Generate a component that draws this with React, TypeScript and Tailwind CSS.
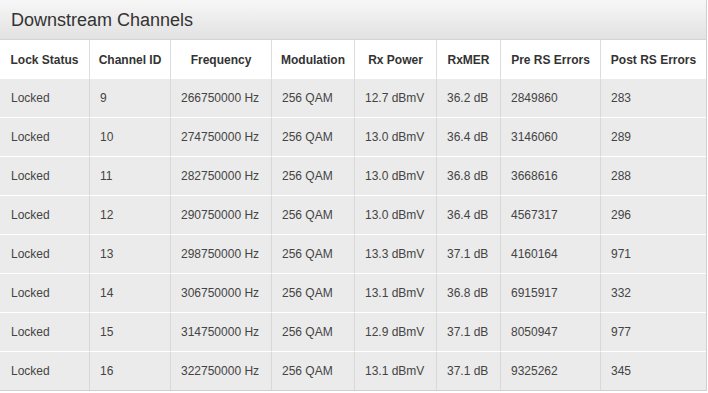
import React from 'react';

const cols = [
  { label: 'Lock Status', w: 90 },
  { label: 'Channel ID', w: 81 },
  { label: 'Frequency', w: 101 },
  { label: 'Modulation', w: 83 },
  { label: 'Rx Power', w: 82 },
  { label: 'RxMER', w: 64 },
  { label: 'Pre RS Errors', w: 100 },
  { label: 'Post RS Errors', w: 105 },
];

const rows = [
  ['Locked', '9', '266750000 Hz', '256 QAM', '12.7 dBmV', '36.2 dB', '2849860', '283'],
  ['Locked', '10', '274750000 Hz', '256 QAM', '13.0 dBmV', '36.4 dB', '3146060', '289'],
  ['Locked', '11', '282750000 Hz', '256 QAM', '13.0 dBmV', '36.8 dB', '3668616', '288'],
  ['Locked', '12', '290750000 Hz', '256 QAM', '13.0 dBmV', '36.4 dB', '4567317', '296'],
  ['Locked', '13', '298750000 Hz', '256 QAM', '13.3 dBmV', '37.1 dB', '4160164', '971'],
  ['Locked', '14', '306750000 Hz', '256 QAM', '13.1 dBmV', '36.8 dB', '6915917', '332'],
  ['Locked', '15', '314750000 Hz', '256 QAM', '12.9 dBmV', '37.1 dB', '8050947', '977'],
  ['Locked', '16', '322750000 Hz', '256 QAM', '13.1 dBmV', '37.1 dB', '9325262', '345'],
];

const App: React.FC = () => {
  return (
    <div className="w-[708px] h-[393px] bg-white font-['Liberation_Sans',Arial,sans-serif] overflow-hidden">
      <div className="w-[707px] border-r border-b border-[#cfcfcf]">
        {/* Title bar */}
        <div className="h-[40px] flex items-center pl-[11px] bg-gradient-to-b from-[#f7f7f7] to-[#e2e2e2] border-b border-[#d4d4d4]">
          <h2 className="text-[18px] text-[#333] leading-none">Downstream Channels</h2>
        </div>

        <table className="table-fixed border-separate border-spacing-0 w-[706px] text-[12px]">
          <colgroup>
            {cols.map((c) => (
              <col key={c.label} style={{ width: c.w }} />
            ))}
          </colgroup>
          <thead>
            <tr className="bg-white">
              {cols.map((c, i) => (
                <th
                  key={c.label}
                  className={
                    'h-[38px] p-0 pt-[1px] text-center font-bold text-[#333] align-middle ' +
                    (i < cols.length - 1 ? 'border-r border-[#dcdcdc]' : '')
                  }
                >
                  {c.label}
                </th>
              ))}
            </tr>
          </thead>
          <tbody>
            {rows.map((r, ri) => (
              <tr key={ri} className="bg-[#ebebeb]">
                {r.map((v, ci) => (
                  <td
                    key={ci}
                    className={
                      'h-[39px] p-0 text-left text-[#444] align-middle border-t border-white ' +
                      (ci === 0 ? 'pl-[11px] ' : 'pl-[10px] ') +
                      (ci < r.length - 1 ? 'border-r border-r-[#d8d8d8]' : '')
                    }
                  >
                    {v}
                  </td>
                ))}
              </tr>
            ))}
          </tbody>
        </table>
      </div>
    </div>
  );
};

export default App;
